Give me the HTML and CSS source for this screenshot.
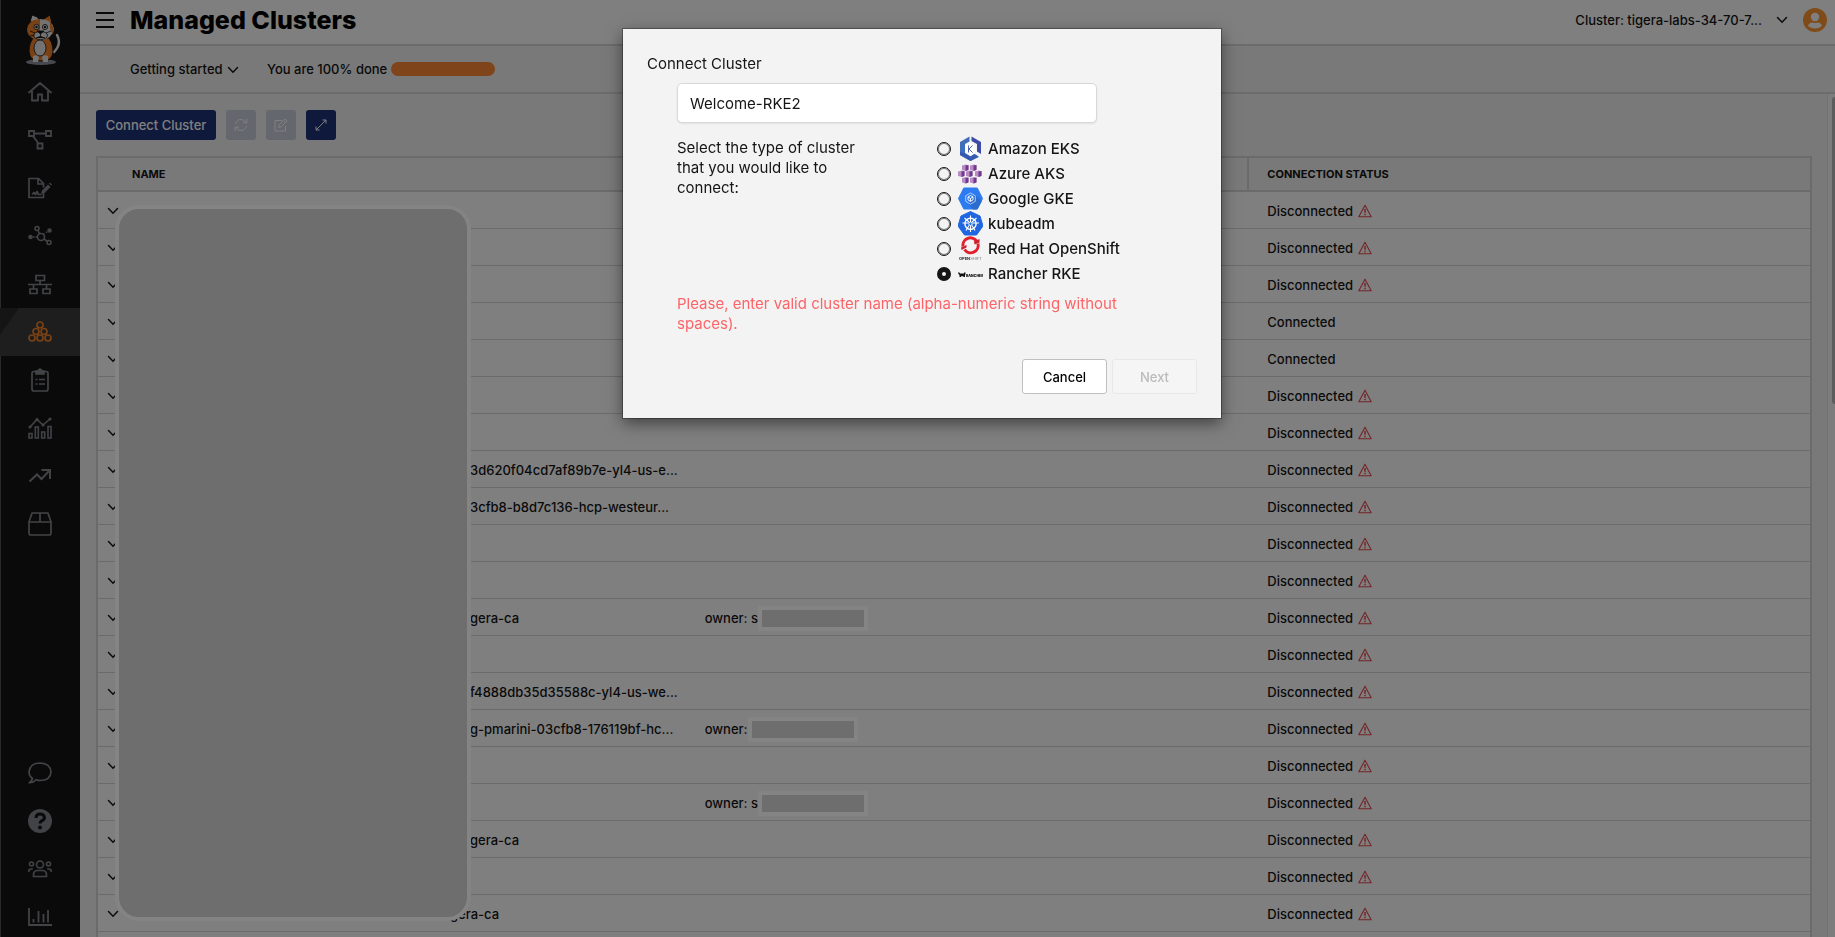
FILE: index.html
```html
<!DOCTYPE html>
<html lang="en">
<head>
    <meta charset="UTF-8">
    <meta name="viewport" content="width=device-width, initial-scale=1.0">
    <title>Managed Clusters</title>
    <link rel="stylesheet" href="styles.css">
</head>
<body>
    <!-- shared icons -->
    <svg class="sprite" aria-hidden="true">
        <symbol id="chevron" viewBox="0 0 12 8">
            <path d="M1.5 1.5 6 6.2l4.500-4.700" fill="none" stroke="currentColor" stroke-width="1.500" stroke-linecap="round"/>
        </symbol>
        <symbol id="warn" viewBox="0 0 14 14">
            <path d="M7 1.200 13.200 12.800H.8z" fill="none" stroke="currentColor" stroke-width="1.100" stroke-linejoin="round"/>
            <path d="M7 5v3.800M7 9.800v1.400" stroke="currentColor" stroke-width="1.500"/>
        </symbol>
    </svg>

    <div class="app">
        <nav class="sidebar">
            <a class="logo" href="#" aria-label="Home page">
                <svg width="36" height="52" viewBox="0 0 36 52">
                    <ellipse cx="15" cy="48" rx="15" ry="3" fill="#8e939e"/>
                    <path d="M28 38q8-8 3-17" fill="none" stroke="#e6e6e6" stroke-width="2.500" stroke-linecap="round"/>
                    <path d="M4 8 6 1q5 1 8 5z" fill="#e6e6e6" stroke="#151515"/>
                    <path d="m16 6 8-5 2 8z" fill="#f5822a" stroke="#151515"/>
                    <path d="M7 24q-6 9-3 18 2 5 11 5t11-5q3-9-3-18z" fill="#f5822a" stroke="#151515"/>
                    <path d="M14 5Q3 5 1 15q0 9 13 12z" fill="#f5822a"/>
                    <path d="M14 5q12 0 14 10-1 9-14 12z" fill="#e6e6e6"/>
                    <path d="M24 8q5 5 3 12-4-4-3-12z" fill="#f5822a"/>
                    <ellipse cx="14" cy="34" rx="6" ry="8" fill="#e6e6e6" stroke="#151515" stroke-width=".8"/>
                    <path d="M7 42q4-2 6 1l-1 5H7zM22 42q-4-2-6 1l1 5h5z" fill="#e6e6e6"/>
                    <circle cx="10.500" cy="13" r="2.600" fill="#e6e6e6" stroke="#151515" stroke-width=".8"/><circle cx="19" cy="13" r="2.600" fill="#e6e6e6" stroke="#151515" stroke-width=".8"/>
                    <circle cx="10.500" cy="13" r="1.200" fill="#151515"/><circle cx="19" cy="13" r="1.200" fill="#151515"/>
                    <ellipse cx="14.500" cy="21.500" rx="7" ry="4" fill="#e6e6e6" stroke="#151515" stroke-width=".8"/>
                    <path d="M11 17h7l-3.500 3zM14.500 20v3M10 24q4-3 9 0M4 17l5 2M4 22l5-1M25 17l-5 2" fill="#151515" stroke="#151515" stroke-width=".8"/>
                </svg>
            </a>
            <a class="item" href="#" aria-label="Dashboard">
                <svg viewBox="0 0 24 24"><path d="M1 12.500 12 3l11 9.500M4 11v9.500h6V14.500h4v6h6V11" fill="none" stroke="currentColor" stroke-width="1.800" stroke-linejoin="round" stroke-linecap="round"/></svg>
            </a>
            <a class="item" href="#" aria-label="Service graph">
                <svg viewBox="0 0 24 24" fill="none" stroke="currentColor" stroke-width="1.800"><path d="M1 3h5v5H1zM18 3h5v5h-5zM9.500 15.500h5v5h-5zM6 5.500h12M5 8l5.500 7.500"/></svg>
            </a>
            <a class="item" href="#" aria-label="Policies">
                <svg viewBox="0 0 24 24"><path d="M15.500 17v4.500H1v-19h9.500l5 5v4M10 2.500v5.500h5.500M4 18.500l2-2 1.500 2 1.500-3 1.500 3h3" fill="none" stroke="currentColor" stroke-width="1.700" stroke-linejoin="round"/><path d="m13 18 1-3.500 6-6 2.500 2.500-6 6zM21 7.500 22 6.500l2 2-1 1z" fill="currentColor"/></svg>
            </a>
            <a class="item" href="#" aria-label="Endpoints">
                <svg viewBox="0 0 24 24" fill="none" stroke="currentColor" stroke-width="1.600"><circle cx="13" cy="13" r="3.500"/><circle cx="9" cy="4.500" r="2"/><circle cx="21" cy="18.500" r="2"/><circle cx="21.500" cy="6.500" r="1.500" fill="currentColor"/><circle cx="2.500" cy="13" r="1.500" fill="currentColor"/><path d="m10 6.500 1.500 3.500M16 15l3 2.200M5 13h1.500M7.500 13H9M15.500 10.500l1-.8M18 8.700l1-.8"/></svg>
            </a>
            <a class="item" href="#" aria-label="Network sets">
                <svg viewBox="0 0 24 24" fill="none" stroke="currentColor" stroke-width="1.700"><path d="M8 3.500h8.500v5H8zM2 17h7v4.500H2zM15 17h7v4.500h-7zM12 8.500v4M0 12.500h24M5.500 12.500V17M18.500 12.500V17"/></svg>
            </a>
            <a class="item active" href="#" aria-label="Managed clusters">
                <svg viewBox="0 0 24 24" fill="none" stroke="currentColor" stroke-width="1.700"><circle cx="12" cy="5" r="3"/><circle cx="8" cy="11.500" r="3"/><circle cx="16" cy="11.500" r="3"/><circle cx="4" cy="18" r="3"/><circle cx="12" cy="18" r="3"/><circle cx="20" cy="18" r="3"/></svg>
            </a>
            <a class="item" href="#" aria-label="Compliance reports">
                <svg viewBox="0 0 24 24" fill="none" stroke="currentColor" stroke-width="1.700"><rect x="4" y="3.500" width="16" height="19.500" rx="2"/><path d="M8 3v3h8V3h-2q-2-4-4 0z" fill="currentColor"/><path d="M7.500 11.500h2M11 11.500h6M7.500 16h2M11 16h6"/></svg>
            </a>
            <a class="item" href="#" aria-label="Activity">
                <svg viewBox="0 0 24 24" fill="none" stroke="currentColor" stroke-width="1.600"><path d="M1 17.500h3v4.500H1zM7.300 11h3v11h-3zM13.700 16h3v6h-3zM20 10.500h3V22h-3zM2 11l7-7.500 6 5.500 7-6"/><circle cx="2" cy="11" r=".8"/><circle cx="9" cy="3.500" r=".8"/><circle cx="15" cy="9" r=".8"/><circle cx="22" cy="3" r=".8"/></svg>
            </a>
            <a class="item" href="#" aria-label="Trends">
                <svg viewBox="0 0 24 24" fill="none" stroke="currentColor" stroke-width="2"><path d="m1.500 17.500 7.500-7 4.500 4.500 8-8.500M13.500 6H22v9"/></svg>
            </a>
            <a class="item" href="#" aria-label="Threat feeds">
                <svg viewBox="0 0 24 24" fill="none" stroke="currentColor" stroke-width="1.700" stroke-linejoin="round"><path d="M1 10 4 1h16l3 9v11.500l-1 1.500H2l-1-1.500zM1 10h22M12 1v9"/></svg>
            </a>
            <div class="sidebar-bottom">
                <a class="item" href="#" aria-label="Feedback">
                    <svg viewBox="0 0 24 24" fill="none" stroke="currentColor" stroke-width="1.700" stroke-linejoin="round"><path d="M4.500 17.500Q1 15 1 11q1-9 11-9 10.500.5 11 9-.5 8.500-11 8.500-2 0-4-.8Q5 22 1.200 21.700 4 20 4.500 17.500z"/></svg>
                </a>
                <a class="item" href="#" aria-label="Help">
                    <svg viewBox="0 0 24 24"><circle cx="12" cy="12" r="12" fill="currentColor"/><path d="M8 9q0-4 4-4t4.500 3.500q0 2-2.500 3.200-2 1-2 2.800" fill="none" stroke="#151515" stroke-width="3"/><circle cx="12" cy="18.500" r="2" fill="#151515"/></svg>
                </a>
                <a class="item" href="#" aria-label="Users">
                    <svg viewBox="0 0 24 24" fill="none" stroke="currentColor" stroke-width="1.600"><circle cx="12" cy="7.500" r="3.500"/><circle cx="3.500" cy="7" r="2"/><circle cx="20.500" cy="7" r="2"/><path d="M5.500 19.500q-.5-6 4-6h5q4.500 0 4 6zM.8 15q-.5-3.500 4-3M23.200 15q.5-3.500-4-3"/></svg>
                </a>
                <a class="item" href="#" aria-label="Statistics">
                    <svg viewBox="0 0 24 24" fill="none" stroke="currentColor" stroke-width="1.800"><path d="M1 3v17h23M5.500 17.500V14M10.500 17.500V6M15.500 17.500V9M20 17.500V5"/></svg>
                </a>
            </div>
        </nav>

        <div class="main">
            <header class="topbar">
                <button class="plain menu" aria-label="Toggle menu">
                    <svg width="18" height="16" viewBox="0 0 18 16"><path d="M0 1h18M0 8h18M0 15h18" stroke="currentColor" stroke-width="2"/></svg>
                </button>
                <h1>Managed Clusters</h1>
                <button class="plain cluster-picker">
                    Cluster: tigera-labs-34-70-7...
                    <svg class="chevron" width="12" height="8"><use href="#chevron"/></svg>
                </button>
                <button class="plain avatar" aria-label="Account">
                    <svg width="24" height="24" viewBox="0 0 24 24"><circle cx="12" cy="12" r="12" fill="#ff9933"/><circle cx="12" cy="9" r="4.200" fill="#fff"/><path d="M5 18q1-3.500 4.500-3.500 2.500 1 5 0Q18 14.500 19 18q-7 5-14 0z" fill="#fff"/></svg>
                </button>
            </header>

            <div class="progress-bar">
                <button class="plain getting-started">
                    Getting started
                    <svg class="chevron" width="12" height="8"><use href="#chevron"/></svg>
                </button>
                <span>You are 100% done</span>
                <div class="progress"></div>
            </div>

            <div class="content">
                <div class="toolbar">
                    <button class="btn-primary">Connect Cluster</button>
                    <button class="btn-icon" disabled aria-label="Refresh">
                        <svg width="14" height="14" viewBox="0 0 14 14" fill="none" stroke="currentColor"><path d="M1.500 5.800Q3 1.500 7 1.500q3 0 5 3M12.500 8.200Q11 12.500 7 12.500q-3 0-5-3M12.800.8v4H9M1.200 13.200v-4H5"/></svg>
                    </button>
                    <button class="btn-icon" disabled aria-label="Edit">
                        <svg width="14" height="14" viewBox="0 0 14 14" fill="none" stroke="currentColor"><path d="M8 2.500H1v10.500h10.500V8M4.500 9.500l.5-2.500 6-6 2 2-6 6zM9.500 2.500l2 2"/></svg>
                    </button>
                    <button class="btn-icon" aria-label="Expand">
                        <svg width="12" height="12" viewBox="0 0 12 12" fill="none" stroke="currentColor"><path d="m1 11 10-10M7.500 1H11v3.500M1 7.500V11h3.500"/></svg>
                    </button>
                </div>

                <div class="table-wrap">
                    <table class="clusters">
                        <colgroup><col class="col-toggle"><col><col><col></colgroup>
                        <thead>
                            <tr><th></th><th class="name">Name</th><th></th><th class="status-head">Connection Status</th></tr>
                        </thead>
                        <tbody>
                            <tr><td><svg class="toggle"><use href="#chevron"/></svg></td><td></td><td></td><td><span class="status">Disconnected <svg class="warn"><use href="#warn"/></svg></span></td></tr>
                            <tr><td><svg class="toggle"><use href="#chevron"/></svg></td><td></td><td></td><td><span class="status">Disconnected <svg class="warn"><use href="#warn"/></svg></span></td></tr>
                            <tr><td><svg class="toggle"><use href="#chevron"/></svg></td><td></td><td></td><td><span class="status">Disconnected <svg class="warn"><use href="#warn"/></svg></span></td></tr>
                            <tr><td><svg class="toggle"><use href="#chevron"/></svg></td><td></td><td></td><td><span class="status">Connected</span></td></tr>
                            <tr><td><svg class="toggle"><use href="#chevron"/></svg></td><td></td><td></td><td><span class="status">Connected</span></td></tr>
                            <tr><td><svg class="toggle"><use href="#chevron"/></svg></td><td></td><td></td><td><span class="status">Disconnected <svg class="warn"><use href="#warn"/></svg></span></td></tr>
                            <tr><td><svg class="toggle"><use href="#chevron"/></svg></td><td></td><td></td><td><span class="status">Disconnected <svg class="warn"><use href="#warn"/></svg></span></td></tr>
                            <tr><td><svg class="toggle"><use href="#chevron"/></svg></td><td class="tail">3d620f04cd7af89b7e-yl4-us-e...</td><td></td><td><span class="status">Disconnected <svg class="warn"><use href="#warn"/></svg></span></td></tr>
                            <tr><td><svg class="toggle"><use href="#chevron"/></svg></td><td class="tail">3cfb8-b8d7c136-hcp-westeur...</td><td></td><td><span class="status">Disconnected <svg class="warn"><use href="#warn"/></svg></span></td></tr>
                            <tr><td><svg class="toggle"><use href="#chevron"/></svg></td><td></td><td></td><td><span class="status">Disconnected <svg class="warn"><use href="#warn"/></svg></span></td></tr>
                            <tr><td><svg class="toggle"><use href="#chevron"/></svg></td><td></td><td></td><td><span class="status">Disconnected <svg class="warn"><use href="#warn"/></svg></span></td></tr>
                            <tr><td><svg class="toggle"><use href="#chevron"/></svg></td><td class="tail">gera-ca</td><td><span class="owner">owner: s<i class="mask"></i></span></td><td><span class="status">Disconnected <svg class="warn"><use href="#warn"/></svg></span></td></tr>
                            <tr><td><svg class="toggle"><use href="#chevron"/></svg></td><td></td><td></td><td><span class="status">Disconnected <svg class="warn"><use href="#warn"/></svg></span></td></tr>
                            <tr><td><svg class="toggle"><use href="#chevron"/></svg></td><td class="tail">f4888db35d35588c-yl4-us-we...</td><td></td><td><span class="status">Disconnected <svg class="warn"><use href="#warn"/></svg></span></td></tr>
                            <tr><td><svg class="toggle"><use href="#chevron"/></svg></td><td class="tail">g-pmarini-03cfb8-176119bf-hc...</td><td><span class="owner">owner:<i class="mask"></i></span></td><td><span class="status">Disconnected <svg class="warn"><use href="#warn"/></svg></span></td></tr>
                            <tr><td><svg class="toggle"><use href="#chevron"/></svg></td><td></td><td></td><td><span class="status">Disconnected <svg class="warn"><use href="#warn"/></svg></span></td></tr>
                            <tr><td><svg class="toggle"><use href="#chevron"/></svg></td><td></td><td><span class="owner">owner: s<i class="mask"></i></span></td><td><span class="status">Disconnected <svg class="warn"><use href="#warn"/></svg></span></td></tr>
                            <tr><td><svg class="toggle"><use href="#chevron"/></svg></td><td class="tail">gera-ca</td><td></td><td><span class="status">Disconnected <svg class="warn"><use href="#warn"/></svg></span></td></tr>
                            <tr><td><svg class="toggle"><use href="#chevron"/></svg></td><td></td><td></td><td><span class="status">Disconnected <svg class="warn"><use href="#warn"/></svg></span></td></tr>
                            <tr><td><svg class="toggle"><use href="#chevron"/></svg></td><td class="tail short">gera-ca</td><td></td><td><span class="status">Disconnected <svg class="warn"><use href="#warn"/></svg></span></td></tr>
                            <tr><td></td><td></td><td></td><td></td></tr>
                        </tbody>
                    </table>
                    <div class="mask mask-names"></div>
                </div>
            </div>
        </div>
    </div>

    <div class="overlay"></div>

    <div class="modal-wrap">
        <form class="modal" role="dialog" aria-labelledby="modalTitle">
            <h2 id="modalTitle">Connect Cluster</h2>
            <div class="modal-body">
                <input type="text" class="cluster-name" value="Welcome-RKE2" aria-label="Cluster name">
                <div class="type-row">
                    <p>Select the type of cluster that you would like to connect:</p>
                    <div class="types">
                        <label>
                            <input type="radio" name="type">
                            <svg class="type-icon" viewBox="0 0 25 25"><path d="M11.500.5v5L7 8v9l5.500 3.500 4-2.500 4.500 3-8.500 4L2 19V6z" fill="#3f6fb8"/><path d="m13.500.5 9.500 5.500v12l-4-2.500V8L13.500 5z" fill="#3c4ba5"/><path d="M2 16v3l10.500 6 8-4.500-4-2.500-4 2.500L7 17.500z" fill="#345bb0"/><path d="M12.500 6.500 17.500 9.500v6.500l-5 3-5-3V9.500z" fill="#fff"/><path d="M10.500 9.500v7M14.500 9.500l-3.500 3.500 3.500 3.500" fill="none" stroke="#4c62b3"/></svg>
                            Amazon EKS
                        </label>
                        <label>
                            <input type="radio" name="type">
                            <svg class="type-icon" viewBox="0 0 25 25">
                                <g id="cube"><path d="m4 4.500 4-1 2.500 1v4L8 10l-4-1z" fill="#b58cc4"/><path d="M7.500 4.500 10.500 4v5L7.500 10z" fill="#74378c"/></g>
                                <use href="#cube" x="8"/><use href="#cube" x="-4" y="6"/><use href="#cube" x="4" y="6"/><use href="#cube" x="13" y="6"/><use href="#cube" y="12.500"/><use href="#cube" x="8" y="12.500"/>
                            </svg>
                            Azure AKS
                        </label>
                        <label>
                            <input type="radio" name="type">
                            <svg class="type-icon" viewBox="0 0 25 25"><path d="M6.500 1.500h12q1 0 1.500 1l5 10-5 10q-.5 1-1.500 1h-12q-1 0-1.500-1l-5-10 5-10q.5-1 1.500-1z" fill="#2d7bf0"/><path d="m17 9 7 6-4 7.500q-.5 1-1.500 1H15l-5-6z" fill="#2a6dcf"/><path d="m12.500 7 4.800 2.800v5.500l-4.800 2.800-4.800-2.800V9.800z" fill="none" stroke="#cfe0fb" stroke-width=".8"/><path d="m12.500 9.500 2.500 1.400v3l-2.500 1.500-2.500-1.500v-3zM10 11l2.500 1.500L15 11M12.500 12.500v3" fill="none" stroke="#fff" stroke-width=".9"/></svg>
                            Google GKE
                        </label>
                        <label>
                            <input type="radio" name="type">
                            <svg class="type-icon" viewBox="0 0 25 25"><path d="M12.500.5 22 5l3 10-6.500 9h-12L0 15 3 5z" fill="#1f66e0" stroke="#1f66e0" stroke-linejoin="round"/><g fill="none" stroke="#fff"><circle cx="12.500" cy="12.800" r="5.600" stroke-width="1.400"/><path d="M12.500 4.500v6.500M12.500 14.500V21M4.500 12h6M14.500 12h6.500M6.500 7l4.500 4M18.500 7 14 11M8 19.500l3-5M17 19.500l-3-5" stroke-width="1.100"/><circle cx="12.500" cy="12.800" r="1.700"/></g></svg>
                            kubeadm
                        </label>
                        <label>
                            <input type="radio" name="type">
                            <svg class="type-icon" viewBox="0 0 25 25"><path d="M5 10.500A7.500 7.500 0 0 1 18.500 5" fill="none" stroke="#e2212e" stroke-width="3"/><path d="M20 7.500A7.500 7.500 0 0 1 6.500 13.500" fill="none" stroke="#e2212e" stroke-width="3"/><path d="m16 5.500 5.500-2.500v3.500L16.500 8.500zM3 11.500l5.500-2.500v2.500L3.500 14z" fill="#c8202c"/><text x="1" y="24" font-size="4" font-weight="700" fill="#333">OPEN<tspan font-weight="400" fill="#777">SHIFT</tspan></text></svg>
                            Red Hat OpenShift
                        </label>
                        <label>
                            <input type="radio" name="type" checked>
                            <svg class="type-icon" viewBox="0 0 25 25"><path d="M0 11.500h1.500l.5 1h4v-1h1.500v1.500L7 14v2H5.500v-.8h-2.500v.8H1.500V14L.5 13z" fill="#111"/><text x="8" y="15.500" font-size="3.500" font-weight="900" fill="#111">RANCHER</text></svg>
                            Rancher RKE
                        </label>
                    </div>
                </div>
                <p class="error">Please, enter valid cluster name (alpha-numeric string without spaces).</p>
            </div>
            <div class="modal-footer">
                <button type="button" class="btn-cancel">Cancel</button>
                <button type="submit" class="btn-next" disabled>Next</button>
            </div>
        </form>
    </div>
</body>
</html>
```

FILE: styles.css
```css
* {
    box-sizing: border-box;
}

body {
    font-family: Inter, "Open Sans", sans-serif;
    font-size: 13px;
    font-weight: 500;
    margin: 0;
    color: #151515;
    background-color: #f2f2f2;
    overflow: hidden;
}

button {
    font: inherit;
    cursor: pointer;
}

.sprite {
    display: none;
}

.plain {
    background: none;
    border: none;
    padding: 0;
    color: inherit;
}

.app {
    display: flex;
    height: 100vh;
}

/* Sidebar */
.sidebar {
    width: 80px;
    flex-shrink: 0;
    display: flex;
    flex-direction: column;
    background-color: #151515;
    box-shadow: inset 1px 0 #555;
}

.logo {
    height: 68px;
    padding: 14px 0 0 26px;
}

.logo svg {
    display: block;
}

.item {
    height: 48px;
    flex-shrink: 0;
    display: flex;
    align-items: center;
    justify-content: center;
    color: #84868c;
}

.item svg {
    width: 24px;
    height: 24px;
}

.item.active {
    color: #f5822a;
    background: linear-gradient(125deg, #2a2a2a 15px, #3c3c3c 16px);
}

.sidebar-bottom {
    margin-top: auto;
    margin-bottom: -4px;
}

/* Header */
.main {
    flex: 1;
    min-width: 0;
    display: flex;
    flex-direction: column;
}

.topbar {
    height: 46px;
    flex-shrink: 0;
    display: flex;
    align-items: center;
    padding: 0 8px 4px 16px;
    background-color: #fff;
    border-bottom: 2px solid #d8d9da;
}

.topbar svg {
    display: block;
}

.topbar h1 {
    margin: 0 auto 0 16px;
    font-size: 25px;
    font-weight: 800;
    line-height: 30px;
    color: #000;
}

.cluster-picker {
    display: flex;
    align-items: center;
    gap: 14px;
}

.avatar {
    margin-left: 15px;
}

.progress-bar {
    height: 48px;
    flex-shrink: 0;
    display: flex;
    align-items: center;
    padding-left: 50px;
    border-bottom: 2px solid #d8d9da;
}

.getting-started {
    margin-right: 28px;
}

.getting-started .chevron {
    margin-left: 1px;
}

.progress {
    width: 104px;
    height: 14px;
    margin-left: 4px;
    border-radius: 7px;
    background-color: #ff8833;
}

/* Content */
.content {
    position: relative;
    flex: 1;
    min-height: 0;
    overflow: hidden;
    padding: 16px 23px 0 16px;
}

/* scroll track and thumb */
.content::before {
    content: "";
    position: absolute;
    top: 0;
    right: 0;
    bottom: 0;
    width: 7px;
    background-color: #fafafa;
    border-left: 1px solid #e4e4e4;
}

.content::after {
    content: "";
    position: absolute;
    top: 3px;
    right: 0;
    width: 3px;
    height: 307px;
    border-radius: 3px 0 0 3px;
    background-color: #bbb;
}

.toolbar {
    display: flex;
    gap: 10px;
    margin-bottom: 16px;
}

.btn-primary,
.btn-icon {
    height: 30px;
    border: none;
    border-radius: 3px;
    color: #fff;
    background-color: #1f3278;
}

.btn-primary {
    width: 120px;
    padding: 0;
}

.btn-icon {
    width: 30px;
    display: flex;
    align-items: center;
    justify-content: center;
    padding: 0;
}

.btn-icon:disabled {
    background-color: #cbcfdd;
    cursor: default;
}

.table-wrap {
    position: relative;
    border: 2px solid #d6d7d9;
    background-color: #fff;
}

.clusters {
    width: 100%;
    table-layout: fixed;
    border-collapse: separate;
    border-spacing: 0;
}

.col-toggle {
    width: 24px;
}

.clusters th {
    height: 34px;
    padding: 0 20px;
    text-align: left;
    font-size: 11px;
    font-weight: 700;
    text-transform: uppercase;
    background-color: #f2f2f2;
    border-bottom: 2px solid #d6d7d9;
}

.clusters th.name {
    padding-left: 10px;
}

.clusters .status-head {
    padding-left: 18px;
    border-left: 2px solid #d6d7d9;
}

.clusters td {
    height: 37px;
    padding: 2px 20px 0;
    white-space: nowrap;
    border-bottom: 1px solid #d6d7d9;
}

.clusters td:first-child {
    padding: 2px 0 0 9px;
}

.clusters td.tail {
    padding: 2px 0 0 348px;
}

.clusters td.short {
    padding-left: 328px;
}

.toggle {
    display: block;
    width: 12px;
    height: 8px;
}

.status,
.owner {
    display: flex;
    align-items: center;
}

.status {
    gap: 5px;
}

.warn {
    width: 14px;
    height: 14px;
    color: #e8484f;
}

/* Blanked out values stay above the overlay */
.mask {
    position: relative;
    z-index: 20;
    width: 110px;
    height: 25px;
    border: 4px solid #848484;
    background-color: #6e6e6e;
}

.mask-names {
    position: absolute;
    top: 47px;
    left: 17px;
    width: 356px;
    height: 716px;
    border-radius: 24px;
}

/* Modal */
.overlay {
    position: fixed;
    inset: 0;
    z-index: 10;
    background-color: rgba(0, 0, 0, 0.5);
}

.modal-wrap {
    position: fixed;
    inset: 0;
    z-index: 30;
    display: flex;
    justify-content: center;
    align-items: flex-start;
    padding: 29px 0 0 9px;
}

.modal {
    width: 598px;
    padding: 25px 24px 24px;
    font-size: 15px;
    font-weight: 400;
    line-height: 20px;
    background-color: #f3f3f3;
    box-shadow: 0 0 0 1px rgba(0, 0, 0, 0.3), 0 5px 15px rgba(0, 0, 0, 0.5);
}

.modal h2 {
    margin: 0 0 9px;
    font-size: 15px;
    font-weight: 400;
    line-height: 20px;
}

.modal-body {
    padding: 0 70px 0 30px;
}

.modal p {
    margin: 0;
}

.cluster-name {
    display: block;
    width: 420px;
    height: 40px;
    padding: 0 12px;
    font: inherit;
    color: inherit;
    background-color: #fff;
    border: 1px solid #d8d8d8;
    border-radius: 5px;
    box-shadow: 0 1px 2px rgba(0, 0, 0, 0.08);
}

.type-row {
    display: flex;
    justify-content: space-between;
    margin: 13px 0 8px;
}

.type-row p {
    width: 190px;
    padding-top: 2px;
}

.types {
    width: 190px;
    font-weight: 500;
}

.types label {
    height: 25px;
    display: flex;
    align-items: center;
    white-space: nowrap;
}

.types input {
    appearance: none;
    width: 14px;
    height: 14px;
    margin: 0 7px 0 0;
    border: 1px solid #151515;
    border-radius: 50%;
    box-shadow: inset 0 0 0 1px rgba(21, 21, 21, 0.5);
}

.types input:checked {
    border-width: 5px;
    box-shadow: none;
}

.type-icon {
    width: 25px;
    height: 25px;
    margin-right: 5px;
}

.modal .error {
    color: #fd6468;
}

.modal-footer {
    display: flex;
    justify-content: flex-end;
    gap: 5px;
    margin-top: 25px;
}

.modal-footer button {
    width: 85px;
    height: 35px;
    padding: 0;
    font-size: 13px;
    font-weight: 500;
    border-radius: 3px;
}

.btn-cancel {
    color: #000;
    background-color: #fff;
    border: 1px solid #c0c0c0;
}

.btn-next {
    color: #bbb;
    background-color: #f5f5f5;
    border: 1px solid #e8e8e8;
}
```
